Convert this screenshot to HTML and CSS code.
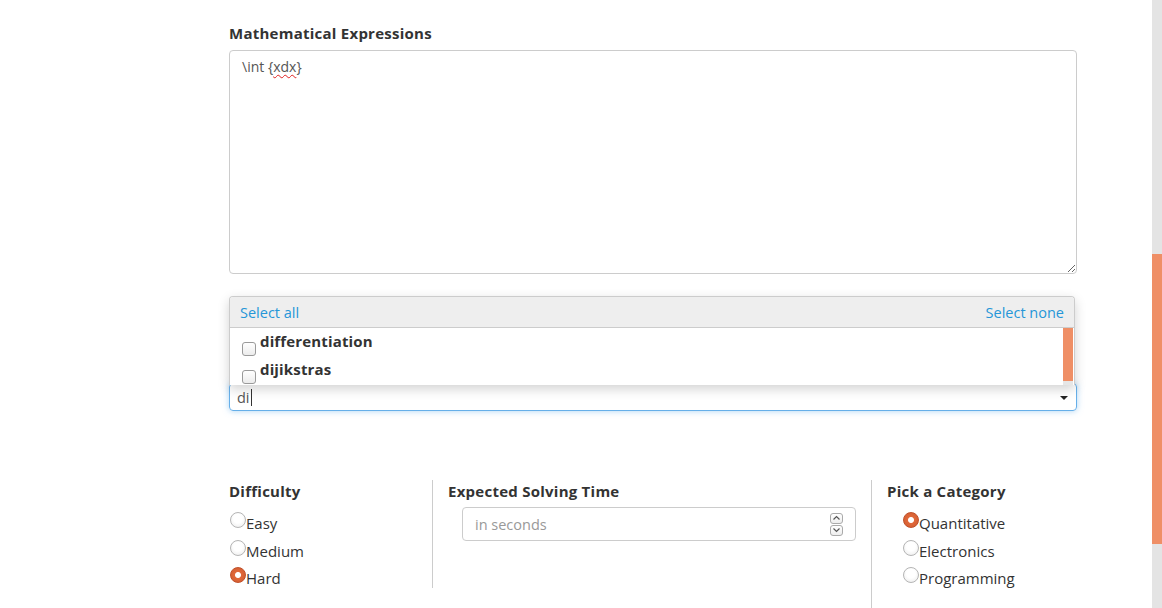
FILE: index.html
```html
<!DOCTYPE html>
<html>
<head>
<meta charset="utf-8">
<link rel="stylesheet" href="styles.css">
</head>
<body>
<div class="page">
  <div class="main">
    <div class="label">Mathematical Expressions</div>
    <div class="textarea">\int {<span class="misspelled">xdx</span>}</div>

    <div class="select">
      <div class="popup">
        <div class="popup-head">
          <span class="link">Select all</span>
          <span class="link">Select none</span>
        </div>
        <div class="popup-body">
          <div class="items">
            <div class="item"><span class="checkbox"></span><span class="item-text">differentiation</span></div>
            <div class="item"><span class="checkbox"></span><span class="item-text">dijikstras</span></div>
          </div>
          <div class="inner-scroll"><div class="inner-thumb"></div></div>
        </div>
      </div>
      <span class="typed">di</span><span class="caret"></span>
      <span class="arrow"></span>
    </div>

    <div class="cols">
      <div class="col col-1">
        <div class="label">Difficulty</div>
        <div class="radio-row"><span class="radio"></span>Easy</div>
        <div class="radio-row"><span class="radio"></span>Medium</div>
        <div class="radio-row"><span class="radio checked"></span>Hard</div>
      </div>
      <div class="col col-2">
        <div class="label">Expected Solving Time</div>
        <div class="number-input">
          <span class="placeholder">in seconds</span>
          <span class="spinner">
            <span class="spin-btn"><svg width="9" height="6" viewBox="0 0 9 6"><path d="M1.5 4.5 L4.5 1.5 L7.5 4.5" fill="none" stroke="#555" stroke-width="1.2"/></svg></span>
            <span class="spin-btn"><svg width="9" height="6" viewBox="0 0 9 6"><path d="M1.5 1.5 L4.5 4.5 L7.5 1.5" fill="none" stroke="#555" stroke-width="1.2"/></svg></span>
          </span>
        </div>
      </div>
      <div class="col col-3">
        <div class="label">Pick a Category</div>
        <div class="radio-row"><span class="radio checked"></span>Quantitative</div>
        <div class="radio-row"><span class="radio"></span>Electronics</div>
        <div class="radio-row"><span class="radio"></span>Programming</div>
      </div>
    </div>
  </div>
  <div class="scrollbar"><div class="thumb"></div></div>
</div>
</body>
</html>
```

FILE: styles.css
```css
html, body {
  margin: 0;
  padding: 0;
  background: #fff;
}
body {
  font-family: "Open Sans", "DejaVu Sans", sans-serif;
  color: #333;
}
.page {
  display: flex;
  height: 608px;
  overflow: hidden;
}
.main {
  flex: 1;
  padding-left: 229px;
  padding-top: 23px;
}
.label {
  font-size: 15px;
  font-weight: 700;
  line-height: 20px;
  letter-spacing: 0.25px;
  color: #333;
}
.textarea {
  margin-top: 7px;
  width: 848px;
  height: 224px;
  box-sizing: border-box;
  border: 1px solid #ccc;
  border-radius: 4px;
  padding: 6px 12px;
  font-size: 14px;
  line-height: 20px;
  color: #555;
  resize: vertical;
  overflow: auto;
}
.misspelled {
  text-decoration: underline wavy #e02020;
  text-decoration-thickness: 1px;
  text-underline-offset: 2px;
}
.select {
  position: relative;
  margin-top: 109px;
  width: 848px;
  height: 28px;
  box-sizing: border-box;
  border: 1px solid #66afe9;
  border-radius: 4px;
  box-shadow: 0 0 6px rgba(102, 175, 233, 0.55);
  padding-left: 7px;
  display: flex;
  align-items: center;
  font-size: 14.5px;
  color: #555;
}
.caret {
  display: inline-block;
  width: 1px;
  height: 17px;
  background: #333;
  margin-left: 1px;
}
.arrow {
  position: absolute;
  right: 8px;
  top: 12px;
  width: 0;
  height: 0;
  border-left: 4px solid transparent;
  border-right: 4px solid transparent;
  border-top: 4px solid #222;
}
.popup {
  position: absolute;
  left: -1px;
  bottom: calc(100% - 1px);
  width: 846px;
  height: 89px;
  box-sizing: border-box;
  border: 1px solid #ccc;
  border-bottom: none;
  border-radius: 4px 4px 0 0;
  background: #fff;
  box-shadow: 0 4px 12px rgba(0, 0, 0, 0.18);
  overflow: hidden;
  display: flex;
  flex-direction: column;
}
.popup-head {
  flex: none;
  background: #eee;
  border-bottom: 1px solid #ccc;
  display: flex;
  justify-content: space-between;
  align-items: center;
  padding: 0 10px;
  box-sizing: border-box;
  height: 31px;
}
.link {
  color: #2596d8;
  font-size: 14.5px;
}
.popup-body {
  flex: 1;
  display: flex;
  overflow: hidden;
}
.items {
  flex: 1;
  padding-left: 12px;
}
.item {
  height: 28px;
  display: flex;
  align-items: flex-start;
}
.checkbox {
  width: 14px;
  height: 14px;
  box-sizing: border-box;
  border: 1px solid #9a9a9a;
  border-radius: 3px;
  background: linear-gradient(#fff, #ececec);
  margin-top: 14px;
  margin-right: 4px;
  flex: none;
}
.item-text {
  font-size: 15px;
  font-weight: 700;
  line-height: 20px;
  letter-spacing: 0.15px;
  margin-top: 3px;
  color: #333;
}
.inner-scroll {
  width: 10px;
  margin-right: 1px;
  background: #e6e6e6;
}
.inner-thumb {
  height: 53px;
  background: #ef8f66;
}
.cols {
  margin-top: 69px;
  display: flex;
  align-items: flex-start;
}
.col {
  box-sizing: border-box;
  padding-top: 1px;
}
.col-1 {
  width: 204px;
  height: 108px;
  border-right: 1px solid #ccc;
}
.col-2 {
  width: 438px;
  padding-left: 15px;
  padding-right: 15px;
}
.col-3 {
  width: 206px;
  height: 140px;
  border-left: 1px solid #ccc;
  padding-left: 15px;
}
.col-1 .label, .col-3 .label {
  margin-bottom: 8px;
}
.col-3 .radio-row {
  padding-left: 15px;
}
.radio-row {
  height: 27.5px;
  display: flex;
  align-items: center;
  font-size: 15px;
  color: #333;
  padding-top: 1px;
  box-sizing: border-box;
}
.radio {
  width: 16px;
  height: 16px;
  box-sizing: border-box;
  border-radius: 50%;
  border: 1px solid #b5b5b5;
  background: radial-gradient(circle at 50% 40%, #fff 40%, #e8e8e8 100%);
  margin-top: -6px;
  margin-left: 1px;
  flex: none;
}
.radio.checked {
  border: 1px solid #c0502a;
  background: radial-gradient(circle, #fff 0 2.5px, #e0683a 3.5px, #cf5a2e 100%);
}
.number-input {
  margin-top: 6px;
  margin-left: 14px;
  height: 34px;
  box-sizing: border-box;
  border: 1px solid #ccc;
  border-radius: 4px;
  display: flex;
  align-items: center;
  justify-content: space-between;
  padding-left: 12px;
  padding-right: 12px;
  font-size: 14.5px;
}
.placeholder {
  color: #999;
}
.spinner {
  display: flex;
  flex-direction: column;
  gap: 1px;
}
.spin-btn {
  width: 13px;
  height: 11px;
  box-sizing: border-box;
  border: 1px solid #aaa;
  border-radius: 3px;
  background: linear-gradient(#fff, #eee);
  display: flex;
  align-items: center;
  justify-content: center;
}
.scrollbar {
  width: 10px;
  flex: none;
  background: #e4e4e4;
}
.thumb {
  margin-top: 254px;
  height: 290px;
  background: #ef8f66;
}
```
